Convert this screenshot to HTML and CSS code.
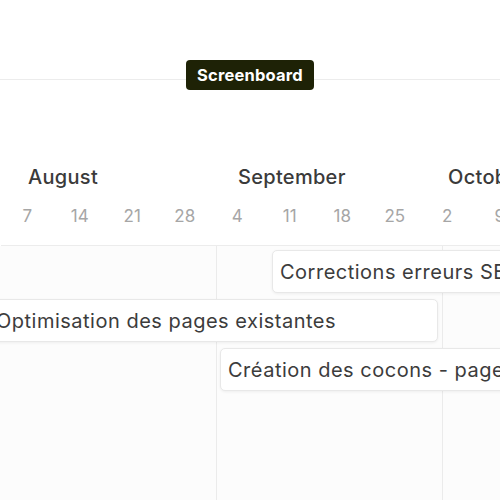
FILE: index.html
```html
<!DOCTYPE html>
<html lang="fr">
<head>
<meta charset="utf-8">
<title>Timeline</title>
<link rel="stylesheet" href="styles.css">
</head>
<body>
<div class="page">
  <header class="topbar">
    <span class="badge">Screenboard</span>
  </header>
  <section class="timeline">
    <div class="months">
      <div class="month">August</div>
      <div class="month">September</div>
      <div class="month">October</div>
    </div>
    <div class="days">
      <span>7</span><span>14</span><span>21</span><span>28</span>
      <span>4</span><span>11</span><span>18</span><span>25</span>
      <span>2</span><span>9</span>
    </div>
    <div class="grid">
      <div class="vline" style="left:216px"></div>
      <div class="vline" style="left:442px"></div>
      <div class="row">
        <div class="bar" style="left:272px;width:260px">Corrections erreurs SEO</div>
      </div>
      <div class="row">
        <div class="bar" style="left:-12px;width:450px">Optimisation des pages existantes</div>
      </div>
      <div class="row">
        <div class="bar" style="left:220px;width:320px">Création des cocons - pages piliers</div>
      </div>
    </div>
  </section>
</div>
</body>
</html>
```
FILE: styles.css
```css
* { box-sizing: border-box; }
html, body {
  margin: 0;
  padding: 0;
  width: 500px;
  height: 500px;
  overflow: hidden;
  background: #ffffff;
  font-family: Inter, "Noto Sans", sans-serif;
  color: #37352f;
}
.page {
  width: 500px;
  height: 500px;
  display: flex;
  flex-direction: column;
}
.topbar {
  position: relative;
  height: 80px;
  border-bottom: 1px solid #ececec;
  flex: none;
}
.badge {
  position: absolute;
  left: 186px;
  top: 60px;
  width: 128px;
  height: 30px;
  background: #1e2206;
  color: #ffffff;
  border-radius: 4px;
  font-weight: 700;
  font-size: 16.5px;
  letter-spacing: 0.2px;
  display: flex;
  align-items: center;
  justify-content: center;
}
.timeline {
  flex: 1;
  display: flex;
  flex-direction: column;
  overflow: hidden;
}
.months {
  display: flex;
  padding-top: 85px;
  padding-left: 28px;
  height: 108px;
  flex: none;
}
.month {
  width: 210px;
  flex: none;
  font-size: 20px;
  font-weight: 500;
  letter-spacing: 0.3px;
  color: #3a3a3a;
  line-height: 24px;
  white-space: nowrap;
}
.days {
  display: flex;
  height: 58px;
  padding-top: 18px;
  margin-left: 1px;
  border-bottom: 1px solid #ececec;
  flex: none;
}
.days span {
  width: 52.5px;
  flex: none;
  text-align: center;
  font-size: 17px;
  line-height: 20px;
  color: #a6a6a6;
}
.grid {
  position: relative;
  flex: 1;
  background: #fcfcfc;
  display: flex;
  flex-direction: column;
  gap: 6px;
  padding-top: 4px;
}
.vline {
  position: absolute;
  top: 0;
  bottom: 0;
  width: 1px;
  background: #ebebeb;
}
.row {
  position: relative;
  height: 43px;
  flex: none;
}
.bar {
  position: absolute;
  top: 0;
  height: 43px;
  background: #ffffff;
  border: 1px solid #e8e8e8;
  border-radius: 5px;
  box-shadow: 0 1px 3px rgba(0,0,0,0.06);
  padding-left: 7px;
  display: flex;
  align-items: center;
  font-size: 20px;
  letter-spacing: 0.5px;
  color: #3c3c3c;
  white-space: nowrap;
  overflow: hidden;
}
```
